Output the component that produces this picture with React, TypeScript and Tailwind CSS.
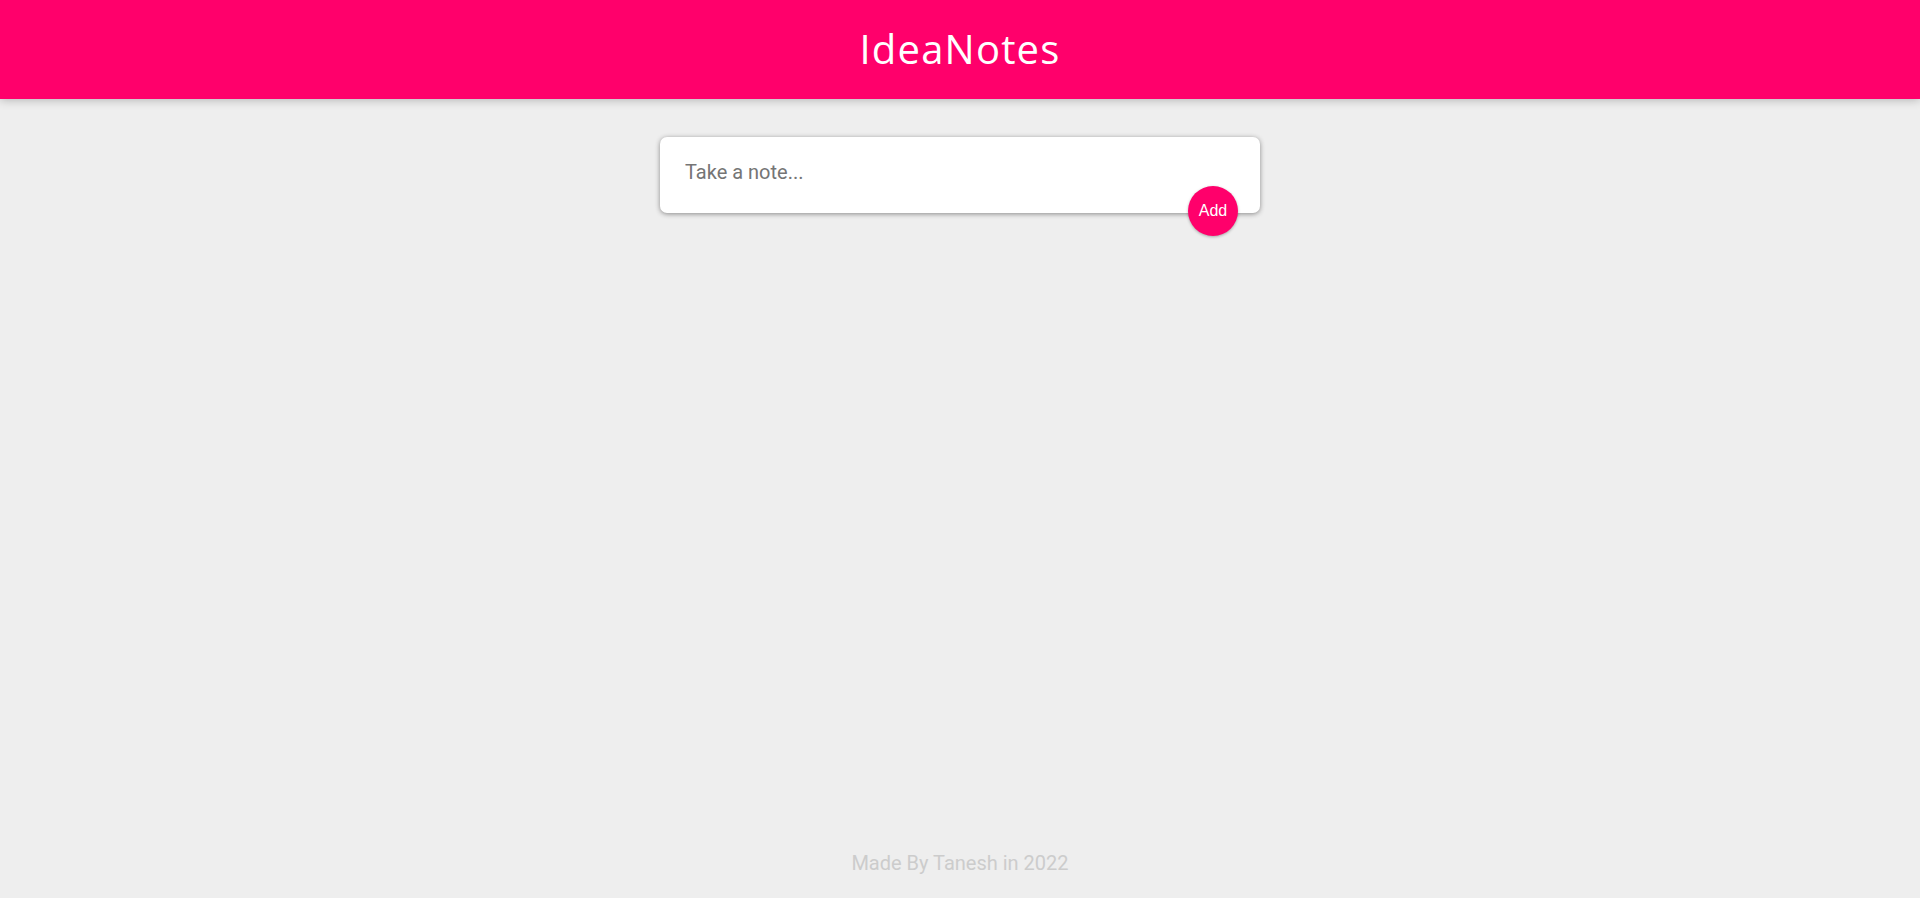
import { useState } from 'react';

export default function App() {
  const [note, setNote] = useState('');

  return (
    <div className="min-h-screen flex flex-col bg-[#eeeeee]" style={{ fontFamily: "Roboto, 'Liberation Sans', sans-serif" }}>
      {/* Header */}
      <header className="h-[99px] flex items-center justify-center bg-[#ff006b] shadow-[0_0_10px_0_rgba(0,0,0,0.3)] relative z-10">
        <h1 className="text-white text-[40px] leading-[56px] pb-[2px] font-normal tracking-[1.2px] font-['Open_Sans',sans-serif]">IdeaNotes</h1>
      </header>

      <main className="flex-1">
        {/* Create area */}
        <form
          className="relative w-[600px] h-[76px] mx-auto mt-[38px] bg-white rounded-[7px] shadow-[0_1px_5px_rgb(138,137,137)] px-[25px] pt-[21px]"
          onSubmit={(e) => {
            e.preventDefault();
            setNote('');
          }}
        >
          <textarea
            value={note}
            onChange={(e) => setNote(e.target.value)}
            rows={1}
            placeholder="Take a note..."
            className="w-full resize-none outline-none border-none text-[20px] leading-[28px] text-[#333] placeholder:text-[#757575] font-['Roboto',sans-serif]"
          />
          <button
            type="submit"
            className="absolute right-[22px] -bottom-[23px] w-[50px] h-[50px] rounded-full bg-[#ff006b] text-white text-[16px] font-['Liberation_Sans',Arial,sans-serif] shadow-[0_1px_3px_rgba(0,0,0,0.3)] cursor-pointer"
          >
            Add
          </button>
        </form>
      </main>

      {/* Footer */}
      <footer className="pb-[21px] text-center">
        <p className="text-[20px] leading-[28px] text-[#cccccc] font-['Roboto',sans-serif]">Made By Tanesh in 2022</p>
      </footer>
    </div>
  );
}
